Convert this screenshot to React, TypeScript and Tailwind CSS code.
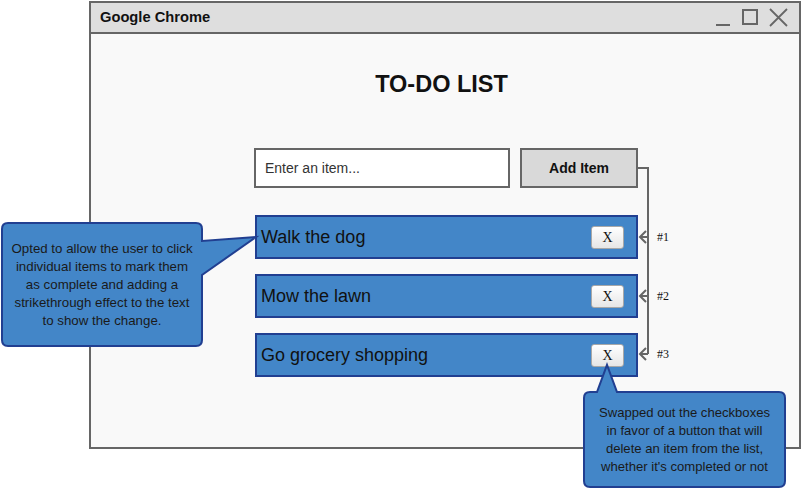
import React from "react";

const items = ["Walk the dog", "Mow the lawn", "Go grocery shopping"];

export default function App() {
  return (
    <div
      className="relative w-[802px] h-[488px] bg-white overflow-hidden"
      style={{ fontFamily: '"Liberation Sans", Arial, sans-serif' }}
    >
      {/* Browser window */}
      <div className="ml-[89px] mt-[1px] w-[712px] h-[448px] border-2 border-[#666] flex flex-col bg-[#f9f9f9]">
        <div className="h-[31px] shrink-0 bg-[#dedede] border-b-2 border-[#666] flex items-center justify-between pl-[9px] pr-[9px]">
          <span className="text-[14.7px] font-bold text-[#111]">Google Chrome</span>
          <svg width="76" height="20" viewBox="0 0 76 20" className="text-[#666]">
            <path d="M2 17 H16" stroke="currentColor" strokeWidth="2" fill="none" />
            <rect x="29" y="2" width="14" height="14" stroke="currentColor" strokeWidth="2" fill="none" />
            <path d="M56 1 L73 18 M73 1 L56 18" stroke="currentColor" strokeWidth="1.8" fill="none" />
          </svg>
        </div>
        <div className="flex-1 flex flex-col pl-[163px]">
          <div className="w-[384px] text-center pt-[37px] pr-[9px]">
            <h1 className="text-[23.5px] leading-[26px] font-bold text-[#111]">TO-DO LIST</h1>
          </div>
          <div className="flex gap-[10px] mt-[51px]">
            <div className="w-[256px] h-[40px] border-2 border-[#666] bg-white flex items-center pl-[9px] text-[14px] text-[#333]">
              Enter an item...
            </div>
            <div className="w-[118px] h-[40px] border-2 border-[#666] bg-[#d9d9d9] flex items-center justify-center text-[14px] font-bold text-[#111]">
              Add Item
            </div>
          </div>
          <div className="flex flex-col gap-[15px] mt-[27px] ml-[1px]">
            {items.map((t) => (
              <div
                key={t}
                className="w-[383px] h-[44px] border-2 border-[#213f91] bg-[#4386c8] flex items-center justify-between pl-[4px] pr-[12px]"
              >
                <span className="text-[18px] text-[#111]">{t}</span>
                <span
                  className="w-[33px] h-[23px] rounded-[3px] border border-[#a8a8a8] bg-gradient-to-b from-white to-[#e6e6e6] flex items-center justify-center text-[14px] text-[#111]"
                  style={{ fontFamily: '"Liberation Serif", "Times New Roman", serif' }}
                >
                  X
                </span>
              </div>
            ))}
          </div>
        </div>
      </div>

      {/* Connector annotation */}
      <svg className="absolute left-0 top-0 pointer-events-none" width="802" height="488">
        <path d="M638 168 H648 V354" stroke="#666" strokeWidth="2" fill="none" />
        {[237, 296, 354].map((y) => (
          <g key={y}>
            <path d={`M648 ${y} H640`} stroke="#666" strokeWidth="2" fill="none" />
            <path d={`M646 ${y - 6} L640 ${y} L646 ${y + 6}`} stroke="#666" strokeWidth="2" fill="none" />
          </g>
        ))}
        {/* left callout */}
        <path
          d="M8 223 H196 Q202 223 202 229 V241 L256 237 L202 275 V340 Q202 346 196 346 H8 Q2 346 2 340 V229 Q2 223 8 223 Z"
          fill="#4386c8"
          stroke="#213f91"
          strokeWidth="2"
        />
        {/* bottom callout */}
        <path
          d="M590 392 H597 L607 365 L617 392 H779 Q785 392 785 398 V481 Q785 487 779 487 H590 Q584 487 584 481 V398 Q584 392 590 392 Z"
          fill="#4386c8"
          stroke="#213f91"
          strokeWidth="2"
        />
      </svg>

      {[
        ["#1", 237],
        ["#2", 296],
        ["#3", 354],
      ].map(([l, y]) => (
        <span
          key={l as string}
          className="absolute left-[657px] text-[12px] leading-[14px] text-[#111]"
          style={{ top: (y as number) - 7, fontFamily: '"Liberation Serif", "Times New Roman", serif' }}
        >
          {l}
        </span>
      ))}

      <div className="absolute left-[2px] top-[223px] w-[200px] h-[123px] flex items-center justify-center text-center text-[13.3px] leading-[18px] text-[#1a1a1a]">
        <p>
          Opted to allow the user to click
          <br />
          individual items to mark them
          <br />
          as complete and adding a
          <br />
          strikethrough effect to the text
          <br />
          to show the change.
        </p>
      </div>

      <div className="absolute left-[584px] top-[392px] w-[201px] h-[95px] flex items-center justify-center text-center text-[13.1px] leading-[18px] text-[#1a1a1a]">
        <p>
          Swapped out the checkboxes
          <br />
          in favor of a button that will
          <br />
          delete an item from the list,
          <br />
          whether it's completed or not
        </p>
      </div>
    </div>
  );
}
